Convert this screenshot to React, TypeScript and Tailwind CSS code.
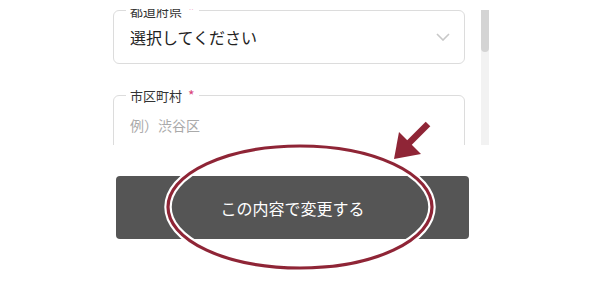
import React from 'react';

function Chevron() {
  return (
    <svg width="14" height="8" viewBox="0 0 14 8" fill="none">
      <path d="M1 1l6 6 6-6" stroke="#c8c8c8" strokeWidth="1.6" />
    </svg>
  );
}

function Field({ label, children, className }: { label: string; children: React.ReactNode; className?: string }) {
  return (
    <div className={`relative rounded-md border border-[#dcdcdc] ${className ?? ''}`}>
      <span className="absolute -top-[9px] left-[12px] bg-white px-[4px] text-[13px] leading-[16px] text-[#333]">
        {label}
        <span className="ml-[6px] text-[14px] text-[#d9437a]">*</span>
      </span>
      {children}
    </div>
  );
}

export default function App() {
  return (
    <div
      className="relative h-[300px] w-[600px] overflow-hidden bg-white"
      style={{ fontFamily: '"Noto Sans CJK JP", "Noto Sans", sans-serif' }}
    >
      <div className="mt-[9px] flex h-[136px] overflow-hidden">
        <div className="ml-[113px] w-[352px] pt-[1px]">
          <Field label="都道府県" className="flex h-[54px] items-center justify-between pl-[16px] pr-[14px]">
            <span className="text-[16px] text-[#222]">選択してください</span>
            <Chevron />
          </Field>
          <Field label="市区町村" className="mt-[31px] h-[70px] pl-[16px] pt-[16px]">
            <span className="text-[14px] leading-[22px] text-[#aaa]">例）渋谷区</span>
          </Field>
        </div>
        <div className="ml-[16px] mt-[1px] w-[8px] bg-[#f2f2f2]">
          <div className="h-[42px] rounded-b-sm bg-[#d4d4d4]" />
        </div>
      </div>

      <button className="ml-[116px] mt-[31px] flex h-[63px] w-[353px] items-center justify-center rounded bg-[#555] text-[16px] text-white">
        この内容で変更する
      </button>

      <svg className="pointer-events-none absolute left-0 top-0" width="600" height="300" viewBox="0 0 600 300">
        <ellipse cx="300" cy="207" rx="132" ry="61" fill="none" stroke="#fff" strokeWidth="7.5" />
        <ellipse cx="300" cy="207" rx="132" ry="61" fill="none" stroke="#8f2536" strokeWidth="3.2" />
        <line x1="428" y1="124" x2="407" y2="145" stroke="#8f2536" strokeWidth="6.5" />
        <polygon points="394,159 399,132 421,154" fill="#8f2536" />
      </svg>
    </div>
  );
}
